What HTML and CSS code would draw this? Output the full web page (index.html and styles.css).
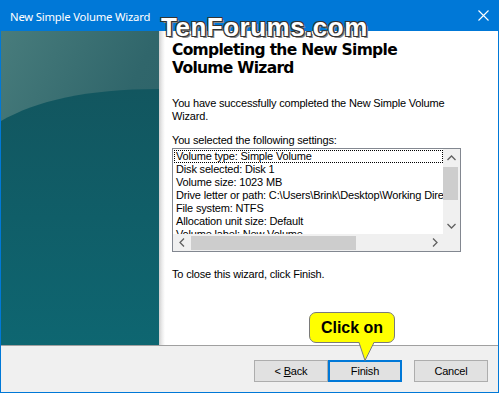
FILE: index.html
```html
<!DOCTYPE html>
<html lang="en">
<head>
<meta charset="UTF-8">
<title>New Simple Volume Wizard</title>
<link rel="stylesheet" href="styles.css">
</head>
<body>

<div class="window">
    <div class="titlebar">
        <span class="title">New Simple Volume Wizard</span>
        <svg class="close" width="11" height="11" viewBox="0 0 11 11">
            <path d="M0.5 0.5 L10.5 10.5 M10.5 0.5 L0.5 10.5" stroke="#fff" stroke-width="1.1"/>
        </svg>
    </div>

    <div class="main">
        <div class="side">
            <svg width="158" height="314" viewBox="0 0 158 314">
                <defs>
                    <linearGradient id="sideTop" x1="0" y1="0" x2="1" y2="1">
                        <stop offset="0" stop-color="#487c7c"/>
                        <stop offset="0.5" stop-color="#30666b"/>
                        <stop offset="1" stop-color="#2a6068"/>
                    </linearGradient>
                    <linearGradient id="sideLow" x1="0" y1="0" x2="0" y2="1">
                        <stop offset="0" stop-color="#12565f"/>
                        <stop offset="1" stop-color="#0e6671"/>
                    </linearGradient>
                </defs>
                <rect width="158" height="314" fill="url(#sideTop)"/>
                <path d="M0 90 C35 70 85 58 158 58 L158 314 L0 314 Z" fill="url(#sideLow)"/>
            </svg>
        </div>
        <div class="edge"></div>
        <div class="content">
            <h1>Completing the New Simple<br>Volume Wizard</h1>
            <p class="intro">You have successfully completed the New Simple Volume<br>Wizard.</p>
            <p class="label">You selected the following settings:</p>

            <div class="listbox">
                <div class="list-area">
                    <div class="lines">
                        <div class="line focus">Volume type: Simple Volume</div>
                        <div class="line">Disk selected: Disk 1</div>
                        <div class="line">Volume size: 1023 MB</div>
                        <div class="line">Drive letter or path: C:\Users\Brink\Desktop\Working Directory</div>
                        <div class="line">File system: NTFS</div>
                        <div class="line">Allocation unit size: Default</div>
                        <div class="line">Volume label: New Volume</div>
                    </div>
                    <div class="vscroll">
                        <div class="arrow">
                            <svg width="9" height="6" viewBox="0 0 9 6"><polyline points="0.5,5 4.5,1 8.5,5" fill="none" stroke="#606060" stroke-width="1.3"/></svg>
                        </div>
                        <div class="vtrack"><div class="vthumb"></div></div>
                        <div class="arrow">
                            <svg width="9" height="6" viewBox="0 0 9 6"><polyline points="0.5,1 4.5,5 8.5,1" fill="none" stroke="#606060" stroke-width="1.3"/></svg>
                        </div>
                    </div>
                </div>
                <div class="hscroll-row">
                    <div class="hscroll">
                        <div class="arrow">
                            <svg width="6" height="9" viewBox="0 0 6 9"><polyline points="5,0.5 1,4.5 5,8.5" fill="none" stroke="#606060" stroke-width="1.3"/></svg>
                        </div>
                        <div class="htrack"><div class="hthumb"></div></div>
                        <div class="arrow">
                            <svg width="6" height="9" viewBox="0 0 6 9"><polyline points="1,0.5 5,4.5 1,8.5" fill="none" stroke="#606060" stroke-width="1.3"/></svg>
                        </div>
                    </div>
                    <div class="corner"></div>
                </div>
            </div>

            <p class="close-note">To close this wizard, click Finish.</p>
        </div>
    </div>

    <div class="footer">
        <button class="btn">&lt; <u>B</u>ack</button>
        <button class="btn btn-default">Finish</button>
        <button class="btn btn-cancel">Cancel</button>
    </div>

    <div class="callout">
        Click on
        <svg class="callout-tail" width="18" height="20" viewBox="0 0 18 20">
            <polygon points="1,0 16,0 7,18.5" fill="#ffff00"/>
            <polyline points="1,0.5 7,18.5 16,0.5" fill="none" stroke="#7a7a7a" stroke-width="1"/>
        </svg>
    </div>

    <div class="watermark">TenForums.com</div>
</div>

</body>
</html>
```

FILE: styles.css
```css
/* Global Styles */
body {
    margin: 0;
    font-family: "Liberation Sans", Arial, sans-serif;
    font-size: 11px;
    letter-spacing: -0.17px;
    color: #000;
}

.window {
    position: relative;
    width: 499px;
    height: 393px;
    box-sizing: border-box;
    border: 1px solid #0078d7;
    border-top: 0;
    background-color: #fff;
    overflow: hidden;
}

.titlebar {
    height: 31px;
    background-color: #0078d7;
    color: #fff;
    display: flex;
    align-items: center;
    justify-content: space-between;
    padding: 1px 9px 0 9px;
    box-sizing: border-box;
}

.title {
    font-family: "Noto Sans", sans-serif;
    font-size: 11.3px;
    letter-spacing: -0.2px;
}

.close {
    display: block;
    margin-top: -1px;
}

.main {
    display: flex;
    height: 314px;
}

.side {
    width: 158px;
}

.side svg {
    display: block;
}

.edge {
    width: 6px;
    background: linear-gradient(to right, #cfcfcf, #ececec 50%, #fff);
}

.content {
    flex: 1;
    padding: 10px 0 0 7px;
}

.content h1 {
    margin: 0;
    font-family: "DejaVu Sans", Verdana, sans-serif;
    font-weight: bold;
    font-size: 15.5px;
    letter-spacing: -0.7px;
    line-height: 18px;
}

.content p {
    margin: 0;
    line-height: 13px;
}

.content .intro {
    margin-top: 20px;
}

.content .label {
    margin-top: 11px;
}

.content .close-note {
    margin-top: 16px;
}

/* Settings list */
.listbox {
    margin-top: 1px;
    width: 289px;
    border: 1px solid #828790;
    box-sizing: border-box;
}

.list-area {
    display: flex;
    height: 85px;
}

.lines {
    flex: 1;
    overflow: hidden;
    padding: 1px 0 0 1px;
}

.line {
    height: 13px;
    line-height: 13px;
    padding-left: 2px;
    white-space: nowrap;
}

.line.focus {
    outline: 1px dotted #000;
    outline-offset: -1px;
}

.vscroll {
    width: 17px;
    background-color: #f0f0f0;
    display: flex;
    flex-direction: column;
}

.arrow {
    width: 17px;
    height: 17px;
    display: flex;
    align-items: center;
    justify-content: center;
}

.vtrack {
    flex: 1;
    padding: 1px 2px 0 0;
}

.vthumb {
    height: 33px;
    background-color: #cdcdcd;
}

.hscroll-row {
    display: flex;
    height: 17px;
}

.hscroll {
    flex: 1;
    display: flex;
    background-color: #f0f0f0;
}

.htrack {
    flex: 1;
    padding: 2px 0 1px 1px;
}

.hthumb {
    width: 165px;
    height: 100%;
    background-color: #cdcdcd;
}

.corner {
    width: 17px;
    background-color: #f0f0f0;
}

/* Footer buttons */
.footer {
    height: 47px;
    box-sizing: border-box;
    border-top: 1px solid #a0a0a0;
    background-color: #f0f0f0;
    display: flex;
    justify-content: flex-end;
    align-items: flex-start;
    padding: 14px 10px 0 0;
}

.btn {
    width: 74px;
    height: 22px;
    padding: 0;
    background-color: #e1e1e1;
    border: 1px solid #adadad;
    font-family: "Liberation Sans", Arial, sans-serif;
    font-size: 11px;
    letter-spacing: -0.17px;
    color: #000;
}

.btn-default {
    border: 2px solid #0078d7;
}

.btn-cancel {
    margin-left: 12px;
}

/* Callout over the buttons */
.callout {
    position: absolute;
    left: 308px;
    top: 312px;
    width: 86px;
    height: 31px;
    box-sizing: border-box;
    background-color: #ffff00;
    border: 1px solid #7a7a7a;
    border-radius: 7px;
    font-weight: bold;
    font-size: 16px;
    letter-spacing: 0;
    line-height: 29px;
    text-align: center;
}

.callout-tail {
    position: absolute;
    left: 48px;
    top: 29px;
}

.watermark {
    position: absolute;
    left: 160px;
    top: 12px;
    font-family: "Liberation Sans", Arial, sans-serif;
    font-weight: bold;
    font-size: 26px;
    letter-spacing: 0.5px;
    color: #fff;
    text-shadow:
        -1px -1px 0 #333,
        1px -1px 0 #333,
        -1px 1px 0 #333,
        1px 1px 0 #333,
        2px 2px 0 #888;
}
```
